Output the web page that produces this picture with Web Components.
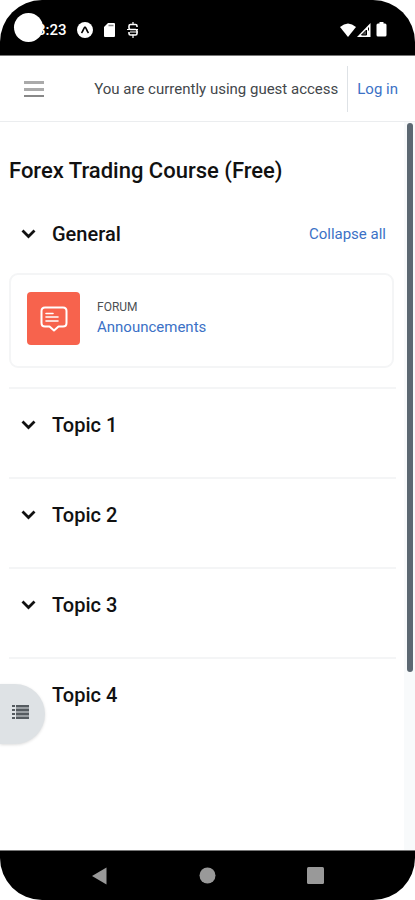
<!DOCTYPE html>
<html lang="en">
<head>
<meta charset="utf-8">
<meta name="viewport" content="width=device-width, initial-scale=1">
<title>Forex Trading Course (Free)</title>
<style>
html,body{height:100%;margin:0}
body{background:#fff;font-family:Roboto,"Liberation Sans",sans-serif;color:#1d2125}
</style>
</head>
<body>
<phone-shell>
  <status-bar slot="top" time="3:23"></status-bar>
  <site-header slot="top">You are currently using guest access</site-header>
  <course-page heading="Forex Trading Course (Free)">
    <course-section heading="General">
      <a-link slot="action" label="Collapse all"></a-link>
      <activity-card kind="Forum" name="Announcements"></activity-card>
    </course-section>
    <course-section heading="Topic 1"></course-section>
    <course-section heading="Topic 2"></course-section>
    <course-section heading="Topic 3"></course-section>
    <course-section heading="Topic 4"></course-section>
  </course-page>
  <index-drawer-button slot="float"></index-drawer-button>
  <system-nav slot="bottom"></system-nav>
</phone-shell>
<script>
const define = (name, html) => customElements.define(name, class extends HTMLElement {
  constructor() {
    super();
    const t = document.createElement('template');
    t.innerHTML = html;
    this.attachShadow({mode: 'open'}).append(t.content.cloneNode(true));
  }
  connectedCallback() {
    this.shadowRoot.querySelectorAll('[data-attr]').forEach(e => {
      e.textContent = this.getAttribute(e.dataset.attr);
    });
  }
});

define('phone-shell', `
<style>
:host{display:flex;flex-direction:column;min-height:100vh;position:relative;overflow:hidden;border-radius:42px;background:#fff}
main{flex:1;display:flex}
.page{flex:1;min-width:0}
.track{width:11px;background:#f8fafb;padding-top:1px;box-sizing:border-box;display:flex;flex-direction:column;align-items:center}
.thumb{width:6px;height:75.5%;border-radius:3px;background:#5c6872}
</style>
<slot name="top"></slot>
<main><div class="page"><slot></slot></div><div class="track"><div class="thumb"></div></div></main>
<slot name="float"></slot>
<slot name="bottom"></slot>`);

define('status-bar', `
<style>
:host{display:flex;align-items:center;height:56px;box-sizing:border-box;padding:4px 28px 0 37px;background:#000;border-bottom:1px solid #777;color:#fff;font-size:15px;font-weight:500;position:relative}
.camera{position:absolute;left:14px;top:13px;width:29px;height:29px;border-radius:50%;background:#fff}
.left,.right{display:flex;align-items:center}
.left{flex:1}
.expo{margin-left:9px}.card{margin-left:9px}.s{margin-left:11px}
.battery{margin-left:5px}
svg{display:block}
</style>
<div class="left">
<span data-attr="time"></span>
<svg class="expo" width="18" height="18" viewBox="0 0 18 18"><circle cx="9" cy="9" r="8" fill="#fff"/><path d="M5.500 12C7 10.500 8 6 9 6s2 4.500 3.500 6" fill="none" stroke="#000" stroke-width="1.600"/></svg>
<svg class="card" width="13" height="16" viewBox="0 0 13 16"><path d="M5 1h6q1 0 1 1v12q0 1-1 1H2q-1 0-1-1V5z" fill="#fff"/><path d="M5.500 3.500h5" stroke="#888" stroke-width="1.500"/></svg>
<svg class="s" width="12" height="16" viewBox="0 0 12 16"><path d="M10 5V4q0-1.500-1.500-1.500h-5Q2 2.500 2 4v2q0 1.500 1.500 1.500h5Q10 7.500 10 9v2.500Q10 13 8.500 13h-5Q2 13 2 11.500V10" fill="none" stroke="#fff" stroke-width="1.600"/><path d="M6 0v3M6 12.500V16M0 7.500h11M3 10h8" fill="none" stroke="#fff" stroke-width="1.200"/></svg>
</div>
<div class="right">
<svg width="16" height="14" viewBox="0 0 16 14"><path d="M0 4Q8-3 16 4L8 14z" fill="#fff"/></svg>
<svg width="15" height="14" viewBox="0 0 15 14"><path d="M1 14L14.500 0v14z" fill="#fff"/><path d="M12.500 4.500v3M5.500 12l5-5v5z" stroke="#000" stroke-width="1" fill="#555"/></svg>
<svg class="battery" width="11" height="15" viewBox="0 0 11 15"><path d="M3.500 0h4v1.500H9q1.500 0 1.500 1.500v10q0 1.500-1.500 1.500H2Q.5 14.500.5 13V3Q.5 1.500 2 1.500h1.500z" fill="#fff"/></svg>
</div>
<div class="camera"></div>`);

define('a-link', `
<style>
:host{display:inline}
a{color:#3b71c6;text-decoration:none}
</style><a href="#" data-attr="label"></a>`);

define('site-header', `
<style>
:host{display:flex;align-items:center;height:66px;box-sizing:border-box;padding:0 17px 0 24px;border-bottom:1px solid #ebedef;background:#fff;font-size:15px;color:#43474b}
button{border:0;background:none;padding:0;display:block}
svg{display:block}
p{margin:0 9px 0 0;flex:1;text-align:right;white-space:nowrap}
.login{border-left:1px solid #dee2e6;padding-left:9px;height:46px;line-height:46px;white-space:nowrap}
</style>
<button aria-label="Side panel"><svg width="20" height="18" viewBox="0 0 20 18"><path d="M0 2.500h20M0 9.500h20" stroke="#aaa" stroke-width="3"/><path d="M0 16h20" stroke="#888" stroke-width="2"/></svg></button>
<p><slot></slot></p>
<div class="login"><a-link label="Log in"></a-link></div>`);

define('course-page', `
<style>
:host{display:block;padding:34px 8px 24px 9px}
h1{margin:0;font-size:22px;line-height:30px;font-weight:500;color:#111}
</style>
<h1 data-attr="heading"></h1>
<slot></slot>`);

define('course-section', `
<style>
:host{display:block;padding:33px 0 19px;border-bottom:2px solid #f4f5f6}
:host(:not(:first-of-type)){padding:21px 0 37px}
:host(:last-of-type){border-bottom:0}
:host(:last-of-type) button{visibility:hidden}
header{display:flex;align-items:center;padding:0 10px 0 12px;font-size:15px;line-height:30px}
button{border:0;background:none;padding:0;margin-right:16px;display:block}
svg{display:block}
h2{flex:1;margin:0;font-size:20px;line-height:30px;font-weight:500;color:#111}
</style>
<header>
<button aria-label="Collapse"><svg width="15" height="10" viewBox="0 0 15 10"><path d="M1.500 1.500L7.500 7.500l6-6" fill="none" stroke="#111" stroke-width="2.800"/></svg></button>
<h2 data-attr="heading"></h2><slot name="action"></slot>
</header>
<slot></slot>`);

define('activity-card', `
<style>
:host{display:flex;margin:24px 2px 0 0;padding:17px 16px 21px;border:2px solid #f4f5f6;border-radius:9px}
.icon{width:53px;height:53px;flex:none;border-radius:4px;background:#f7634d;display:grid;place-items:center}
.text{margin-left:17px;padding-top:7px}
.kind{font-size:12px;line-height:16px;text-transform:uppercase;color:#4c5054}
.name{font-size:15px;line-height:24px}
</style>
<div class="icon"><svg width="28" height="26" viewBox="0 0 28 26"><path d="M5 1.500h18q3.500 0 3.500 3.500v12q0 3.500-3.500 3.500h-4.500L14 24.500 9.500 20.500H5q-3.500 0-3.500-3.500V5Q1.500 1.500 5 1.500z" fill="none" stroke="#fff" stroke-width="2" stroke-linejoin="round"/><path d="M6 7.500h7M6 11h12M6 15h12" stroke="#fff" stroke-width="1.600" stroke-linecap="round"/></svg></div>
<div class="text"><div class="kind" data-attr="kind"></div><div class="name"></div></div>`);

document.querySelectorAll('activity-card').forEach(card => {
  const link = document.createElement('a-link');
  link.setAttribute('label', card.getAttribute('name'));
  card.shadowRoot.querySelector('.name').append(link);
});

define('index-drawer-button', `
<style>
:host{position:absolute;left:0;bottom:156px}
button{display:flex;align-items:center;width:45px;height:60px;border:0;padding:0 0 4px 12px;border-radius:0 30px 30px 0;background:#dee2e5;box-shadow:0 1px 3px #0002}
</style>
<button aria-label="Open course index"><svg width="17" height="16" viewBox="0 0 17 16"><path d="M0 2h3M0 6h3M0 10h3M0 14h3M4 2h13M4 6h13M4 10h13M4 14h13" stroke="#555b60" stroke-width="2"/><path d="M4 4h13M4 8h13M4 12h13" stroke="#9a9fa3" stroke-width="2"/></svg></button>`);

define('system-nav', `
<style>
:host{display:grid;grid-template-columns:repeat(3,108px);justify-content:center;align-items:center;height:50px;background:#000;box-sizing:border-box;border-top:1px solid #777}
button{border:0;background:none;padding:0;justify-self:center}
svg{display:block}
</style>
<button aria-label="Back"><svg width="17" height="18" viewBox="0 0 17 18"><path d="M1 9L15.500.5v17z" fill="#999"/></svg></button>
<button aria-label="Home"><svg width="17" height="17" viewBox="0 0 17 17"><circle cx="8.500" cy="8.500" r="8" fill="#999"/></svg></button>
<button aria-label="Overview"><svg width="17" height="17" viewBox="0 0 17 17"><rect width="17" height="17" rx="1.500" fill="#999"/></svg></button>`);
</script>
</body>
</html>
